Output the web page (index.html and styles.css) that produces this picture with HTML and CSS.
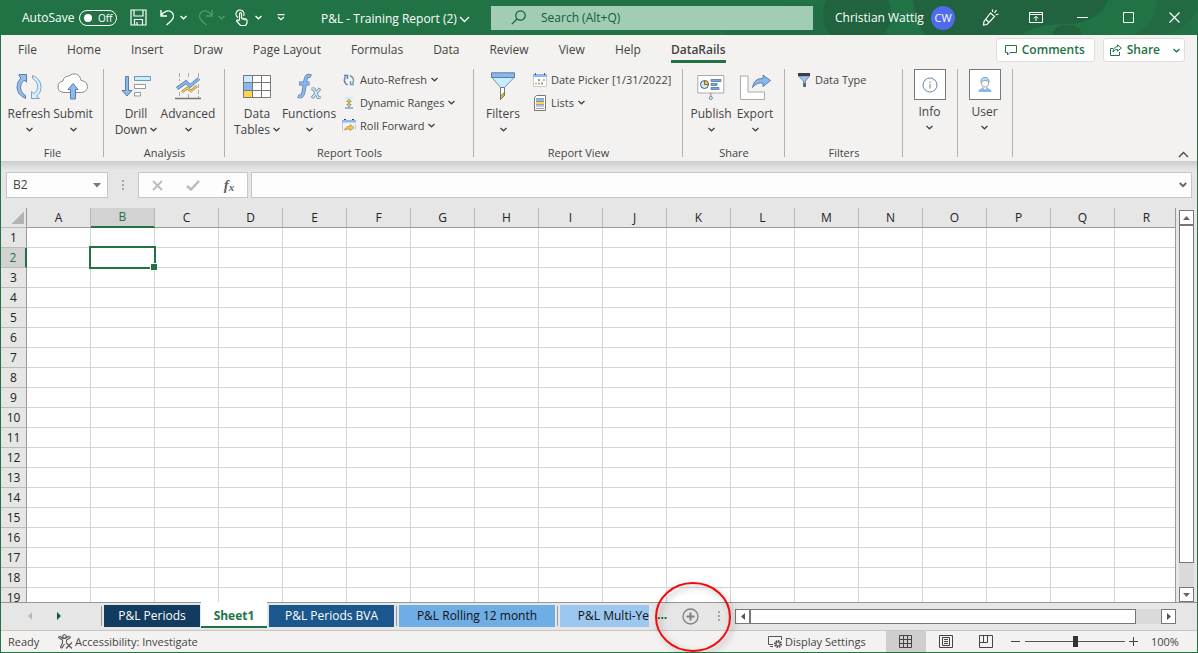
FILE: index.html
```html
<!DOCTYPE html>
<html lang="en">
<head>
    <meta charset="UTF-8">
    <meta name="viewport" content="width=device-width, initial-scale=1.0">
    <title>P&amp;L - Training Report (2)</title>
    <link rel="stylesheet" href="styles.css">
</head>
<body>
    <svg class="sprite" width="0" height="0" aria-hidden="true">
        <symbol id="chev" viewBox="0 0 7 5"><path d="M.5 1l3 2.8L6.5 1" fill="none" stroke="currentColor" stroke-width="1.3"/></symbol>
        <symbol id="chev-big" viewBox="0 0 11 7"><path d="M1 1l4.5 4.5L10 1" fill="none" stroke="currentColor" stroke-width="1.3"/></symbol>
    </svg>

    <div class="app">
        <header class="titlebar">
            <svg class="titlebar-art" viewBox="0 0 480 35" preserveAspectRatio="xMaxYMin slice" aria-hidden="true">
                <ellipse cx="90" cy="52" rx="90" ry="48" fill="#216e44"/>
                <ellipse cx="140" cy="14" rx="34" ry="34" fill="#21623f"/>
                <path d="M196 0h195q-8 22-40 24-34 0-46 11H208q-10-16-12-35z" fill="#21623f"/>
                <ellipse cx="350" cy="33" rx="14" ry="8" fill="#21623f"/>
                <path d="M440 0h40v8q-8 22-34 27h-30q22-10 24-35z" fill="#216a42"/>
            </svg>
            <label class="autosave" for="autosave">AutoSave
                <span class="toggle"><input type="checkbox" id="autosave"><span>Off</span></span>
            </label>
            <div class="quick">
                <button class="tool" aria-label="Save">
                    <svg width="17" height="17" viewBox="0 0 17 17" fill="none" stroke="#fff" stroke-width="1.2"><path d="M1 1h15v15H1zM4 1v6h9V1M4.5 16v-5.500h8V16M7 16v-3"/></svg>
                </button>
                <button class="tool undo" aria-label="Undo">
                    <svg width="15" height="17" viewBox="0 0 15 17" fill="none" stroke="#fff" stroke-width="1.4"><path d="M1 1v6h6M1 6.5C4 2 9 .5 12 3.500S13 10 11 12l-4.500 4"/></svg>
                    <svg class="chev" width="7" height="5"><use href="#chev"/></svg>
                </button>
                <button class="tool redo" aria-label="Redo" disabled>
                    <svg width="15" height="17" viewBox="0 0 15 17" fill="none" stroke="#4f9a6e" stroke-width="1.4"><path d="M14 1v6H8M14 6.500C11 2 6 .5 3 3.500S2 10 4 12l4.500 4"/></svg>
                    <svg class="chev" width="7" height="5"><use href="#chev"/></svg>
                </button>
                <button class="tool touch" aria-label="Touch mode">
                    <svg width="13" height="17" viewBox="0 0 13 17" fill="none" stroke="#fff" stroke-width="1.2"><path d="M3 8.500A4 4 0 1 1 8.500 7M4.500 11V4.500a1 1 0 0 1 2 0V9l4.500 1q1 .3 1 1.500V14l-1.500 2.500H5.500L1.500 12q0-1.500 1.500-1l1.500 1M8 9v2M10 9.500v2"/></svg>
                    <svg class="chev" width="7" height="5"><use href="#chev"/></svg>
                </button>
                <button class="tool more" aria-label="Customize toolbar">
                    <svg width="8" height="7" viewBox="0 0 8 7" fill="none" stroke="#fff" stroke-width="1.2"><path d="M.5.600h7M1 3l3 2.800L7 3"/></svg>
                </button>
            </div>
            <button class="doc-name">P&amp;L - Training Report (2)
                <svg width="11" height="7"><use href="#chev-big"/></svg>
            </button>
            <label class="search">
                <svg width="15" height="15" viewBox="0 0 15 15" fill="none" stroke="#185c37" stroke-width="1.2"><circle cx="9.500" cy="5.500" r="4.700"/><path d="M6 9L.8 14.200"/></svg>
                <input type="text" placeholder="Search (Alt+Q)" aria-label="Search">
            </label>
            <div class="account">
                <span class="user-name">Christian Wattig</span>
                <span class="avatar">CW</span>
            </div>
            <div class="window-buttons">
                <button aria-label="Coming soon">
                    <svg width="17" height="17" viewBox="0 0 17 17" fill="none" stroke="#fff" stroke-width="1.2"><path d="M8.500 4l4 3.500L5 15.500l-3.500.5.500-3.500zM4 10.500l3 3M10.500 3V.5M12.500 4l2-3M13.500 6l3-1"/></svg>
                </button>
                <button aria-label="Ribbon display options">
                    <svg width="14" height="11" viewBox="0 0 14 11" fill="none" stroke="#fff"><path d="M.5.500h13v10H.5zM.5 2.500h13M7 9V4.500M4.800 6.500L7 4.300l2.200 2.200"/></svg>
                </button>
                <button aria-label="Minimize"><svg width="11" height="11" viewBox="0 0 11 11" stroke="#fff"><path d="M0 5.500h11"/></svg></button>
                <button aria-label="Maximize"><svg width="11" height="11" viewBox="0 0 11 11" fill="none" stroke="#fff"><path d="M.5.500h10v10H.5z"/></svg></button>
                <button aria-label="Close"><svg width="11" height="11" viewBox="0 0 11 11" stroke="#fff" stroke-width="1.200"><path d="M.5.500l10 10M10.500.500l-10 10"/></svg></button>
            </div>
        </header>

        <nav class="menu">
            <a href="#">File</a>
            <a href="#">Home</a>
            <a href="#">Insert</a>
            <a href="#">Draw</a>
            <a href="#">Page Layout</a>
            <a href="#">Formulas</a>
            <a href="#">Data</a>
            <a href="#">Review</a>
            <a href="#">View</a>
            <a href="#">Help</a>
            <a href="#" class="active">DataRails</a>
            <div class="menu-actions">
                <button>
                    <svg width="12" height="12" viewBox="0 0 12 12" fill="none" stroke="#217346"><path d="M.5 1.500h11v7H5l-2.500 2.500V8.500h-2z"/></svg>
                    Comments
                </button>
                <button class="share">
                    <svg width="12" height="12" viewBox="0 0 12 12" fill="none" stroke="#217346"><path d="M3 4.500H.5v7h9V8M7.500.800l3.800 3.200-3.800 3.200V5.500Q4.500 5 3 8q.3-5 4.500-5.300z"/></svg>
                    Share
                    <svg class="chev" width="7" height="5"><use href="#chev"/></svg>
                </button>
            </div>
        </nav>

        <div class="ribbon">
            <section class="group file">
                <div class="items">
                    <button class="big">
                        <svg width="28" height="30" viewBox="0 0 28 30" stroke-linejoin="round"><path d="M10.500 26.500Q2 22.500 2 15 2 9.500 6 6L4 4V2.500h7.500V10L9 8.200Q5.500 11 5.500 15q0 5.500 5 8.500z" fill="#92bfee" stroke="#5b7ea8"/><path d="M17.500 3.500q8.500 3.500 8.500 11.500 0 6-4.500 9l3 2.500H16.500V19.500l2.500 2.200q3.700-2.700 3.700-6.700 0-6-5.200-8.500z" fill="#d5f2fc" stroke="#7ba3bf"/></svg>
                        <span>Refresh</span><svg class="chev" width="7" height="5"><use href="#chev"/></svg>
                    </button>
                    <button class="big">
                        <svg width="32" height="30" viewBox="0 0 32 30"><path d="M7 20.500Q1 20 1 15q0-5 5-6 1-5 6-5Q15 1 18.500 2 23 3 24 8.500q6 .5 6.500 6 0 5-6 6z" fill="#fff" stroke="#8c8c8c"/><path d="M16 11.500l5 6h-2.500v9.500h-5v-9.500H11z" fill="#8cb9ee" stroke="#5b7ea8"/></svg>
                        <span>Submit</span><svg class="chev" width="7" height="5"><use href="#chev"/></svg>
                    </button>
                </div>
                <h2>File</h2>
            </section>

            <section class="group analysis">
                <div class="items">
                    <button class="big">
                        <svg width="30" height="30" viewBox="0 0 30 30"><path d="M4.500 4.500h3v14H11l-5 5.500-5-5.500h3.500z" fill="#8cb9ee" stroke="#5b7ea8"/><path d="M13.500 4.500h16v4h-16z" fill="#c9eefb" stroke="#6a9cb5"/><path d="M13.500 12.500h11v4h-11zM13.500 20.500h6v3.500h-6z" fill="#fff" stroke="#999"/></svg>
                        <span>Drill<br>Down <svg class="chev" width="7" height="5"><use href="#chev"/></svg></span>
                    </button>
                    <button class="big">
                        <svg width="28" height="30" viewBox="0 0 28 30" fill="none"><path d="M5.500 1v8M14.500 1v5M24.500 1v4M5.500 20v6M14.500 22v4M24.500 12v14" stroke="#aaa" stroke-dasharray="4 2"/><path d="M1 26.500h26" stroke="#777" stroke-width="1.500"/><path d="M3 16.500l9-6.500 4 4 9-7.500" stroke="#6283a8" stroke-width="3.500"/><path d="M3 16.500l9-6.500 4 4 9-7.500" stroke="#88b8f0" stroke-width="2"/><path d="M8 20l5-4 4 3 6-5" stroke="#8d7843" stroke-width="2.500"/><path d="M8 20l5-4 4 3 6-5" stroke="#f6ce51" stroke-width="1.500"/></svg>
                        <span>Advanced</span><svg class="chev" width="7" height="5"><use href="#chev"/></svg>
                    </button>
                </div>
                <h2>Analysis</h2>
            </section>

            <section class="group tools">
                <div class="items">
                    <button class="big">
                        <svg width="28" height="30" viewBox="0 0 28 30" stroke="#777"><path d="M.5 3.500h27v22H.5z" fill="#fff"/><path d="M.5 3.500h9v7h-9z" fill="#c9eefb"/><path d="M.5 10.500h9v8h-9z" fill="#88b8f0"/><path d="M.5 18.500h9v7h-9z" fill="#ffd34d"/><path d="M18.500 3.500v22M.5 10.500h27M.5 18.500h27"/></svg>
                        <span>Data<br>Tables <svg class="chev" width="7" height="5"><use href="#chev"/></svg></span>
                    </button>
                    <button class="big">
                        <svg width="26" height="30" viewBox="0 0 26 30" fill="none"><path d="M15 4.500Q10.500 2 9.500 8L7.500 20q-1 6-5.500 4M3 11.500h10.500" stroke="#5b7ea8" stroke-width="4"/><path d="M14.500 4.300Q10.500 2 9.500 8L7.500 20q-1 6-5 4.200M3.500 11.500H13" stroke="#88b8f0" stroke-width="2.500"/><path d="M15.500 17h2.500l4 8.500h2.500M24 16.500l-8 9.500" stroke="#72879a" stroke-width="3"/><path d="M16 17h2l4 8.500h2M23.500 17l-7 8.500" stroke="#c9eefb" stroke-width="1.500"/></svg>
                        <span>Functions</span><svg class="chev" width="7" height="5"><use href="#chev"/></svg>
                    </button>
                    <div class="stack">
                        <button class="small">
                            <svg width="14" height="14" viewBox="0 0 14 14" fill="none"><path d="M5.500 12Q.5 9 3.500 3.500M2 2.500h3.500V6" stroke="#5f86b5" stroke-width="1.500"/><path d="M8 2.500q5.500 3 2.500 8M12 11.500H8.500V8" stroke="#7d9db2" stroke-width="1.500"/></svg>
                            Auto-Refresh <svg class="chev" width="7" height="5"><use href="#chev"/></svg>
                        </button>
                        <button class="small">
                            <svg width="14" height="14" viewBox="0 0 14 14"><path d="M3 1h8v2H3z" fill="#c9eefb"/><path d="M3 11h8v2H3z" fill="#88b8f0"/><path d="M7 3l2.200 2.500H7.800v3h1.400L7 11 4.800 8.500h1.400v-3H4.800z" fill="#ffd34d" stroke="#776b45" stroke-width=".6"/></svg>
                            Dynamic Ranges <svg class="chev" width="7" height="5"><use href="#chev"/></svg>
                        </button>
                        <button class="small">
                            <svg width="14" height="14" viewBox="0 0 14 14"><path d="M.5 1.500v11M13.500 5v6" stroke="#ccc"/><path d="M0 1h14v2.500H0z" fill="#88b8f0"/><path d="M2 0h2v1H2zM10 0h2v1h-2z" fill="#444"/><path d="M2.500 11Q4 7 8 7.500V5.500l4 3.200-4 2.800V10Q5 9.500 2.500 11z" fill="#ffc936" stroke="#8d7843" stroke-width=".6"/></svg>
                            Roll Forward <svg class="chev" width="7" height="5"><use href="#chev"/></svg>
                        </button>
                    </div>
                </div>
                <h2>Report Tools</h2>
            </section>

            <section class="group view">
                <div class="items">
                    <button class="big">
                        <svg width="26" height="30" viewBox="0 0 26 30"><path d="M2 5.500l8.500 10v11.500l4-4v-7.500L24 5.500z" fill="#c9eefb" stroke="#6f94a8"/><path d="M10.500 15.500h4v7.500l-4 4z" fill="#fff" stroke="#777"/><path d="M10.500 24l4-3.500V23l-4 4.500z" fill="#ffc936" stroke="#776b45"/><path d="M1.500.800h23v4.700h-23z" fill="#88b8f0" stroke="#5b7ea8"/></svg>
                        <span>Filters</span><svg class="chev" width="7" height="5"><use href="#chev"/></svg>
                    </button>
                    <div class="stack">
                        <button class="small">
                            <svg width="14" height="14" viewBox="0 0 14 14"><path d="M.5 1.500h13v12H.5z" fill="#fff" stroke="#ccc"/><path d="M0 1h14v3H0z" fill="#88b8f0"/><path d="M2 0h1v2H2zM11 0h1v2h-1z" fill="#555"/><path d="M5 6h2v2H5zM8 9.500h2v2H8z" fill="#999"/><path d="M10 6h2v2h-2zM2 9.500h2v2H2z" fill="#f6be35"/><path d="M5 9.500h2v2H5z" fill="#88b8f0"/></svg>
                            Date Picker [1/31/2022]
                        </button>
                        <button class="small">
                            <svg width="14" height="16" viewBox="0 0 14 16"><path d="M3.500.500h9v15h-11v-13z" fill="#fff" stroke="#777"/><path d="M3 4h8v2.500H3z" fill="#88b8f0"/><path d="M3 7h8v2H3z" fill="#ffd34d"/><path d="M3 10h8v2H3z" fill="#a9c9ee"/><path d="M3 3.500h8M3 6.500h8M3 9.500h8M3 13.500h8" stroke="#777" stroke-width=".7"/></svg>
                            Lists <svg class="chev" width="7" height="5"><use href="#chev"/></svg>
                        </button>
                    </div>
                </div>
                <h2>Report View</h2>
            </section>

            <section class="group sharing">
                <div class="items">
                    <button class="big">
                        <svg width="28" height="30" viewBox="0 0 28 30"><path d="M.8 3.500h26v17.500H.8z" fill="#fff" stroke="#aaa"/><circle cx="7.500" cy="12.500" r="4" fill="#c9eefb" stroke="#557"/><path d="M7.500 12.500V8.500a4 4 0 0 1 4 4z" fill="#ffc936" stroke="#776b45"/><path d="M14 7.500h10v2H14zM14 11.500h6v2h-6zM14 15.500h8v2h-8z" fill="#78a9e3" stroke="#567a9f" stroke-width=".8"/><path d="M13.800 21v4" stroke="#888"/><circle cx="13.800" cy="26" r="1.600" fill="#c9eefb" stroke="#7790a0"/></svg>
                        <span>Publish</span><svg class="chev" width="7" height="5"><use href="#chev"/></svg>
                    </button>
                    <button class="big">
                        <svg width="32" height="30" viewBox="0 0 32 30"><path d="M1.500 4H9v16h16.500v7.500h-24z" fill="#fff" stroke="#aaa"/><path d="M13.500 15.500Q15 6 24 6.500V3l7.500 5.500-7.500 6V11Q18 10 13.500 15.500z" fill="#88b8f0" stroke="#5b7ea8"/></svg>
                        <span>Export</span><svg class="chev" width="7" height="5"><use href="#chev"/></svg>
                    </button>
                </div>
                <h2>Share</h2>
            </section>

            <section class="group filters">
                <div class="items">
                    <button class="small">
                        <svg width="14" height="14" viewBox="0 0 14 14"><path d="M1.500 3h11L8.500 8v5.500h-2V8z" fill="#9cc4f2" stroke="#6f8cab"/><path d="M7 10h1.500v4H6.500z" fill="#555"/><path d="M1 0h12v3H1z" fill="#3d3d3d"/></svg>
                        Data Type
                    </button>
                </div>
                <h2>Filters</h2>
            </section>

            <section class="group boxed">
                <button class="big">
                    <span class="frame"><svg width="16" height="16" viewBox="0 0 16 16"><circle cx="8" cy="8" r="7" fill="#fff" stroke="#6483a8"/><path d="M8 4.500V6M8 7v4.500" stroke="#777"/></svg></span>
                    <span>Info</span><svg class="chev" width="7" height="5"><use href="#chev"/></svg>
                </button>
            </section>
            <section class="group boxed">
                <button class="big">
                    <span class="frame"><svg width="16" height="16" viewBox="0 0 16 16"><path d="M1.500 15q0-3 3-3.500l2-1h3l2 1q3 .5 3 3.500z" fill="#88b8f0"/><path d="M6 9h4v2.500L8 13l-2-1.500z" fill="#fff" stroke="#999" stroke-width=".6"/><ellipse cx="8" cy="5.500" rx="3.500" ry="4.500" fill="#fff" stroke="#888" stroke-width=".8"/><path d="M4 5.500Q3.500.500 8 .500t4 5q-1-2-4-2t-4 2z" fill="#b5e1f2" stroke="#6f94a8" stroke-width=".8"/></svg></span>
                    <span>User</span><svg class="chev" width="7" height="5"><use href="#chev"/></svg>
                </button>
            </section>
            <button class="collapse" aria-label="Collapse the ribbon">
                <svg width="11" height="7" viewBox="0 0 11 7" fill="none" stroke="#444" stroke-width="1.300"><path d="M1 6l4.500-4.500L10 6"/></svg>
            </button>
        </div>

        <div class="formula-bar">
            <div class="name-box">
                <input type="text" value="B2" aria-label="Name box">
                <button aria-label="Cell names"><svg width="8" height="5" viewBox="0 0 8 5"><path d="M0 0h8L4 4.500z" fill="#777"/></svg></button>
            </div>
            <span class="grip"></span>
            <div class="formula-buttons">
                <button aria-label="Cancel"><svg width="11" height="11" viewBox="0 0 11 11" stroke="#bbb" stroke-width="1.800"><path d="M1 1l9 9M10 1l-9 9"/></svg></button>
                <button aria-label="Enter"><svg width="14" height="11" viewBox="0 0 14 11" fill="none" stroke="#bbb" stroke-width="2.500"><path d="M1 6l4 3.500L13 1"/></svg></button>
                <button class="fx" aria-label="Insert function">f<small>x</small></button>
            </div>
            <div class="formula">
                <input type="text" aria-label="Formula bar">
                <button aria-label="Expand formula bar"><svg width="8" height="6" viewBox="0 0 8 6" fill="none" stroke="#666" stroke-width="2"><path d="M.8 1L4 4.200 7.200 1"/></svg></button>
            </div>
        </div>

        <main class="sheet">
            <div class="cells"><table id="grid"></table></div>
            <div class="scroll-y">
                <button aria-label="Scroll up"><svg width="7" height="4" viewBox="0 0 7 4"><path d="M0 4h7L3.500 0z" fill="#666"/></svg></button>
                <div class="thumb"></div>
                <div class="track"></div>
                <button aria-label="Scroll down"><svg width="7" height="4" viewBox="0 0 7 4"><path d="M0 0h7L3.500 4z" fill="#666"/></svg></button>
            </div>
        </main>

        <div class="sheet-tabs">
            <div class="tab-nav">
                <button aria-label="Previous sheet"><svg width="4" height="8" viewBox="0 0 4 8"><path d="M4 0v8L0 4z" fill="#bbb"/></svg></button>
                <button aria-label="Next sheet"><svg width="4" height="8" viewBox="0 0 4 8"><path d="M0 0v8l4-4z" fill="#0e5c2f"/></svg></button>
            </div>
            <button class="tab periods">P&amp;L Periods</button>
            <button class="tab current">Sheet1</button>
            <button class="tab bva">P&amp;L Periods BVA</button>
            <button class="tab rolling">P&amp;L Rolling 12 month</button>
            <button class="tab multi">P&amp;L Multi-Ye</button>
            <button class="tab-more" aria-label="More sheets">...</button>
            <div class="add-sheet">
                <button aria-label="New sheet"><svg width="17" height="17" viewBox="0 0 17 17" fill="none" stroke="#808080"><circle cx="8.500" cy="8.500" r="7.500" stroke-width="1.300"/><path d="M8.500 4.500v8M4.500 8.500h8" stroke-width="2"/></svg></button>
                <svg class="marker" viewBox="0 0 88 82" aria-hidden="true"><ellipse cx="42" cy="38" rx="37" ry="34" fill="none" stroke="#f00c0c" stroke-width="2"/></svg>
            </div>
            <span class="grip"></span>
            <div class="scroll-x">
                <button aria-label="Scroll left"><svg width="4" height="7" viewBox="0 0 4 7"><path d="M4 0v7L0 3.500z" fill="#555"/></svg></button>
                <div class="thumb"></div>
                <div class="track"></div>
                <button aria-label="Scroll right"><svg width="4" height="7" viewBox="0 0 4 7"><path d="M0 0v7l4-3.500z" fill="#555"/></svg></button>
            </div>
        </div>

        <footer class="status">
            <span class="ready">Ready</span>
            <button class="access">
                <svg width="15" height="15" viewBox="0 0 15 15" fill="none" stroke="#555" stroke-width="1.100"><circle cx="6.500" cy="2.500" r="1.800"/><path d="M1 2.500q-.8 1.200.5 1.700L4.500 6v3L2.500 13q.3 1.500 1.700.5L6.500 10M12 2.500q.8 1.200-.5 1.700L8.500 6v2M8 8.500l6 6M14 8.500l-6 6M1.500 2Q5 5 6.500 4.500T11.500 2"/></svg>
                Accessibility: Investigate
            </button>
            <button class="display">
                <svg width="15" height="14" viewBox="0 0 15 14" fill="none" stroke="#555"><path d="M5 9.500H.5v-8h13V5M2 11.500h3"/><circle cx="10" cy="9" r="3" stroke-dasharray="1.500 .8" stroke-width="2"/><circle cx="10" cy="9" r="2"/></svg>
                Display Settings
            </button>
            <div class="views">
                <button class="on" aria-label="Normal"><svg width="14" height="14" viewBox="0 0 14 14" fill="none" stroke="#444"><path d="M.5.500h12v12H.5zM4.500.500v12M8.500.500v12M.5 4.500h12M.5 8.500h12"/></svg></button>
                <button aria-label="Page layout"><svg width="14" height="14" viewBox="0 0 14 14" fill="none" stroke="#444"><path d="M.5.500h13v12H.5zM3.500 2.500h7v8h-7zM5 4.500h4M5 6.500h4M5 8.500h4"/></svg></button>
                <button aria-label="Page break preview"><svg width="14" height="14" viewBox="0 0 14 14" fill="none" stroke="#444"><path d="M.5.500h13v12H.5zM4.500.500v7M8.500.500v7M.5 7.500h8"/></svg></button>
            </div>
            <div class="zoom">
                <button aria-label="Zoom out"><svg width="9" height="9" viewBox="0 0 9 9" stroke="#444"><path d="M0 4.500h9"/></svg></button>
                <input type="range" min="0" max="100" value="50" aria-label="Zoom">
                <button aria-label="Zoom in"><svg width="9" height="9" viewBox="0 0 9 9" stroke="#444"><path d="M0 4.500h9M4.500 0v9"/></svg></button>
                <span class="percent">100%</span>
            </div>
        </footer>
    </div>

    <script>
        const COL_WIDTH = 64;
        const ROW_HEIGHT = 20;
        const grid = document.getElementById('grid');

        // Draw as many rows and columns as the window can show
        function renderGrid() {
            grid.innerHTML = '';
            const area = grid.parentElement;
            const cols = Math.min(26, Math.ceil((area.clientWidth - 26) / COL_WIDTH));
            const rows = Math.ceil((area.clientHeight - ROW_HEIGHT) / ROW_HEIGHT);

            let html = '<thead><tr><th class="corner"></th>';
            for (let c = 0; c < cols; c++) {
                html += `<th class="${c === 1 ? 'selected' : ''}">${String.fromCharCode(65 + c)}</th>`;
            }
            html += '</tr></thead><tbody>';
            for (let r = 1; r <= rows; r++) {
                html += `<tr><th class="${r === 2 ? 'selected' : ''}">${r}</th>`;
                for (let c = 0; c < cols; c++) {
                    html += r === 2 && c === 1 ? '<td class="cursor"></td>' : '<td></td>';
                }
                html += '</tr>';
            }
            grid.innerHTML = html + '</tbody>';
        }

        renderGrid();
        window.addEventListener('resize', renderGrid);
    </script>
</body>
</html>
```
FILE: styles.css
```css
* {
    box-sizing: border-box;
    margin: 0;
    padding: 0;
}

body {
    font-family: "Open Sans", "Noto Sans", sans-serif;
    font-size: 12px;
    line-height: 16px;
    color: #444;
}

button,
input {
    font: inherit;
    color: inherit;
    background: none;
    border: none;
    outline: none;
}

button {
    display: flex;
    align-items: center;
    white-space: nowrap;
}

a {
    color: inherit;
    text-decoration: none;
}

svg {
    flex: none;
}

.sprite {
    position: absolute;
}

.app {
    display: flex;
    flex-direction: column;
    height: 100vh;
    background: #e6e6e6;
    border: 1px solid #217346;
    border-top: none;
    overflow: hidden;
}

/* Title bar */
.titlebar {
    position: relative;
    display: flex;
    align-items: center;
    height: 35px;
    padding-left: 21px;
    background: #217346;
    color: #fff;
}

.titlebar > * {
    position: relative;
}

.titlebar .titlebar-art {
    position: absolute;
    top: 0;
    right: 0;
    width: 480px;
    height: 35px;
}

.autosave {
    display: flex;
    align-items: center;
    justify-content: space-between;
    width: 95px;
}

.toggle {
    display: flex;
    align-items: center;
    gap: 6px;
    width: 38px;
    height: 16px;
    padding-left: 4px;
    border: 1px solid #fff;
    border-radius: 8px;
    font-size: 10px;
}

.toggle input {
    appearance: none;
    width: 8px;
    height: 8px;
    border-radius: 50%;
    background: #fff;
}

.quick {
    display: flex;
    align-items: center;
    width: 204px;
    padding-left: 13px;
}

.tool {
    gap: 5px;
}

.undo {
    margin-left: 13px;
}

.redo {
    margin-left: 11px;
    color: #4f9a6e;
}

.touch {
    margin-left: 10px;
    gap: 7px;
}

.more {
    margin-left: 15px;
}

.doc-name {
    justify-content: space-between;
    width: 149px;
    padding-top: 3px;
}

.search {
    flex: 1;
    display: flex;
    align-items: center;
    gap: 15px;
    height: 24px;
    margin-left: 21px;
    padding-left: 20px;
    background: #a0cdb4;
}

.search input {
    flex: 1;
    min-width: 0;
}

.search input::placeholder {
    color: #185c37;
    opacity: 1;
}

.account {
    display: flex;
    align-items: center;
    justify-content: space-between;
    width: 120px;
    margin-left: 22px;
}

.avatar {
    width: 24px;
    height: 24px;
    border-radius: 50%;
    background: #4f6bed;
    font-size: 11px;
    line-height: 24px;
    text-align: center;
}

.window-buttons {
    display: flex;
    width: 242px;
    padding-left: 12px;
}

.window-buttons button {
    flex: 1;
    height: 34px;
    justify-content: center;
}

/* Menu tabs */
.menu {
    display: flex;
    gap: 30px;
    height: 30px;
    padding: 0 12px 0 17px;
    background: #f3f2f1;
}

.menu a {
    height: 28px;
    line-height: 30px;
    white-space: nowrap;
}

.menu .active {
    font-weight: 600;
    border-bottom: 3px solid #217346;
}

.menu-actions {
    display: flex;
    gap: 8px;
    margin: 3px 0 0 auto;
}

.menu-actions button {
    gap: 5px;
    height: 24px;
    padding: 0 9px 0 8px;
    background: #fff;
    border: 1px solid #e1dfdd;
    border-radius: 3px;
    color: #217346;
    font-weight: 600;
}

.menu-actions .share {
    padding: 0 4px 0 6px;
}

.share .chev {
    margin-left: 8px;
}

/* Ribbon */
.ribbon {
    display: flex;
    height: 96px;
    background: #f3f2f1;
}

.group {
    position: relative;
    display: flex;
    flex-direction: column;
    justify-content: space-between;
    flex: none;
    height: 96px;
}

.group::after {
    content: "";
    position: absolute;
    top: 4px;
    right: 0;
    width: 1px;
    height: 88px;
    background: #b5b3b1;
}

.group h2 {
    font-size: 11px;
    font-weight: 400;
    line-height: 16px;
    text-align: center;
}

.items {
    display: flex;
    padding: 7px 0 0 6px;
}

.file {
    width: 103px;
}

.analysis {
    width: 121px;
}

.tools {
    width: 249px;
}

.view {
    width: 209px;
}

.sharing {
    width: 102px;
}

.filters {
    width: 118px;
}

.filters .items {
    padding-left: 12px;
}

.boxed {
    width: 55px;
    align-items: center;
    padding-right: 2px;
}

.big {
    flex-direction: column;
    min-width: 44px;
    height: 67px;
    line-height: 16px;
    text-align: center;
}

.big > svg:first-child {
    margin-bottom: 4px;
}

.big > .chev {
    margin-top: 5px;
}

.big span .chev {
    vertical-align: 2px;
}

.analysis .big,
.tools .big {
    width: 52px;
}

.view .big {
    width: 46px;
}

.boxed .big {
    padding-top: 4px;
}

.frame {
    display: grid;
    place-items: center;
    width: 32px;
    height: 31px;
    margin-bottom: 4px;
    background: #fff;
    border: 1px solid #777;
}

.stack {
    margin-left: 7px;
}

.small {
    gap: 4px;
    height: 23px;
    margin-top: -4px;
    font-size: 11px;
}

.small + .small {
    margin-top: 0;
}

.collapse {
    margin: auto 8px 3px auto;
}

/* Formula bar */
.formula-bar {
    display: flex;
    height: 47px;
    padding: 11px 5px 10px;
    background: linear-gradient(#cdcdcd, #e6e6e6 9px);
}

.name-box,
.formula-buttons,
.formula {
    display: flex;
    align-items: center;
    background: #fdfdfd;
    border: 1px solid #c6c6c6;
}

.name-box {
    width: 102px;
    padding: 0 6px;
}

.name-box input {
    flex: 1;
    min-width: 0;
}

.grip {
    width: 2px;
    height: 11px;
    background: repeating-linear-gradient(#a6a6a6 0 2px, transparent 2px 4px);
}

.formula-bar .grip {
    margin: 8px 14px 0;
}

.formula-buttons {
    width: 110px;
}

.formula-buttons button {
    flex: 1;
    justify-content: center;
}

.fx {
    font: italic bold 15px "Liberation Serif", serif;
    color: #666;
}

.fx small {
    font-size: 11px;
    padding-top: 3px;
}

.formula {
    flex: 1;
    margin-left: 3px;
    padding-right: 4px;
}

.formula input {
    flex: 1;
}

/* Cells */
.sheet {
    flex: 1;
    display: flex;
    min-height: 0;
}

.cells {
    flex: 1;
    min-width: 0;
    overflow: hidden;
    background: linear-gradient(#e6e6e6 20px, #fff 20px);
    border-right: 1px solid #999;
}

#grid {
    width: 0;
    table-layout: fixed;
    border-spacing: 0;
    color: #222;
}

#grid th,
#grid td {
    width: 64px;
    height: 20px;
    border-right: 1px solid #d4d4d4;
    border-bottom: 1px solid #d4d4d4;
}

#grid th {
    background: #e6e6e6;
    font-weight: 400;
    line-height: 18px;
}

#grid thead th {
    border-right-color: #b8b8b8;
    border-bottom-color: #999;
}

#grid tbody th,
#grid .corner {
    width: 26px;
    border-right-color: #999;
    border-bottom-color: #bbb;
}

#grid tbody th {
    padding-top: 1px;
}

#grid .corner {
    background: linear-gradient(135deg, transparent 50%, #b4b4b4 50%) 11px 4px / 12px 12px no-repeat #e6e6e6;
}

#grid thead .selected {
    background: #d2d2d2;
    color: #217346;
    border-bottom: 2px solid #217346;
}

#grid tbody .selected {
    background: #d2d2d2;
    color: #217346;
    border-right: 2px solid #217346;
}

.cursor {
    position: relative;
}

.cursor::before {
    content: "";
    position: absolute;
    inset: -2px;
    border: 2px solid #217346;
}

.cursor::after {
    content: "";
    position: absolute;
    right: -3px;
    bottom: -3px;
    width: 6px;
    height: 6px;
    background: #217346;
    border: solid #fff;
    border-width: 1px 0 0 1px;
}

/* Scroll bars */
.scroll-y {
    display: flex;
    flex-direction: column;
    width: 15px;
    margin: 2px 3px 0;
    background: #dadada;
}

.scroll-x {
    flex: 1;
    display: flex;
    height: 15px;
    margin: 6px 21px 0 15px;
    background: #dadada;
}

.scroll-y button,
.scroll-x button {
    flex: none;
    width: 15px;
    height: 15px;
    justify-content: center;
    background: #fff;
    border: 1px solid #777;
}

.thumb {
    background: #fff;
    border: 1px solid #777;
}

.scroll-y .thumb {
    flex: 339;
}

.scroll-y .track {
    flex: 24;
}

.scroll-x .thumb {
    flex: 386;
}

.scroll-x .track {
    flex: 25;
}

/* Sheet tabs */
.sheet-tabs {
    display: flex;
    height: 29px;
    border-top: 1px solid #979797;
    border-bottom: 1px solid #c6c6c6;
}

.tab-nav {
    display: flex;
    gap: 25px;
    width: 101px;
    height: 20px;
    margin: 3px 2px 0 0;
    padding: 0 0 0 27px;
    border-right: 1px solid #999;
}

.tab {
    height: 22px;
    margin-top: 2px;
    justify-content: center;
    color: #111;
}

.periods {
    width: 96px;
    background: #123c5f;
    color: #fff;
}

.tab.current {
    width: 66px;
    height: 26px;
    margin: -1px 2px 0 1px;
    padding-top: 3px;
    background: #fff;
    border-bottom: 2px solid #217346;
    color: #217346;
    font-weight: 700;
}

.bva {
    width: 125px;
    background: #1b578c;
    color: #fff;
}

.rolling {
    width: 156px;
    background: #6eaee5;
}

.multi {
    width: 89px;
    justify-content: flex-end;
    background: #9cc8ef;
}

.rolling,
.multi {
    position: relative;
    margin-left: 5px;
}

.rolling::before,
.multi::before {
    content: "";
    position: absolute;
    top: 1px;
    left: -3px;
    width: 1px;
    height: 20px;
    background: #999;
}

.tab-more {
    width: 12px;
    height: 24px;
    margin-left: 8px;
    color: #0e5c2f;
    font-weight: 700;
}

.add-sheet {
    position: relative;
    margin: 5px 0 0 13px;
}

.marker {
    position: absolute;
    top: -29px;
    left: -31px;
    width: 88px;
    height: 82px;
    filter: drop-shadow(3px 3px 3px rgba(0, 0, 0, 0.3));
    pointer-events: none;
}

.sheet-tabs > .grip {
    margin: 8px 0 0 19px;
}

/* Status bar */
.status {
    display: flex;
    align-items: center;
    height: 21px;
    padding-left: 7px;
    background: #f3f2f1;
    font-size: 11px;
}

.ready {
    width: 50px;
}

.access,
.display {
    gap: 2px;
}

.display {
    margin-left: auto;
    width: 118px;
}

.views {
    display: flex;
}

.views button {
    width: 40px;
    height: 21px;
    justify-content: center;
}

.views .on {
    background: #d0cecc;
}

.zoom {
    display: flex;
    align-items: center;
    width: 191px;
    padding-left: 5px;
}

.zoom input {
    appearance: none;
    width: 100px;
    height: 11px;
    margin: 0 4px 0 5px;
    background: linear-gradient(#555, #555) center / 100% 1px no-repeat;
}

.zoom input::-webkit-slider-thumb {
    appearance: none;
    width: 5px;
    height: 11px;
    background: #333;
}

.percent {
    margin-left: 13px;
}
```
